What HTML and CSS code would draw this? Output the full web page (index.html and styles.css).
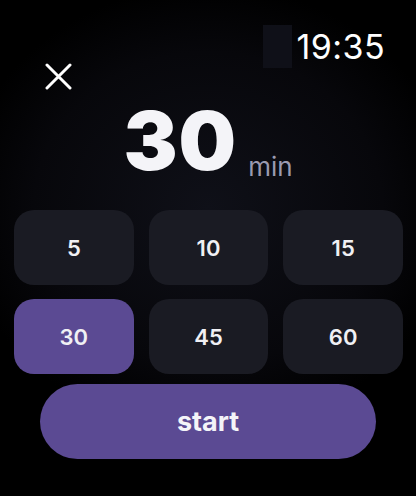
FILE: index.html
```html
<!DOCTYPE html>
<html lang="en">
<head>
    <meta charset="UTF-8">
    <meta name="viewport" content="width=device-width, initial-scale=1.0">
    <title>Timer</title>
    <link rel="stylesheet" href="styles.css">
</head>
<body>
    <div class="screen">
        <!-- top bar: close + clock -->
        <div class="top-bar">
            <button class="close" type="button" aria-label="close">
                <svg width="27" height="27" viewBox="0 0 27 27">
                    <path d="M2 2 L25 25 M25 2 L2 25" stroke="#fff" stroke-width="3" stroke-linecap="round" fill="none"/>
                </svg>
            </button>
            <div class="status">
                <div class="status-box"></div>
                <span class="clock">19:35</span>
            </div>
        </div>

        <!-- selected duration -->
        <div class="duration">
            <span class="duration-value">30</span><span class="duration-unit">min</span>
        </div>

        <!-- presets -->
        <div class="presets">
            <button class="preset" type="button">5</button>
            <button class="preset" type="button">10</button>
            <button class="preset" type="button">15</button>
            <button class="preset active" type="button">30</button>
            <button class="preset" type="button">45</button>
            <button class="preset" type="button">60</button>
        </div>

        <button class="start" type="button">start</button>
    </div>
</body>
</html>
```

FILE: styles.css
```css
body {
    margin: 0;
    padding: 0;
    background: #000;
    font-family: Inter, "Noto Sans", sans-serif;
    color: #f4f4f8;
}

.screen {
    width: 416px;
    height: 496px;
    box-sizing: border-box;
    background: radial-gradient(ellipse 60% 45% at 50% 42%, #0f1018 0%, #07070b 70%, #000 100%);
    overflow: hidden;
}

.top-bar {
    display: flex;
    justify-content: space-between;
    align-items: flex-start;
    padding: 25px 31px 0 45px;
    height: 89px;
    box-sizing: border-box;
}

.close {
    margin-top: 38px;
    padding: 0;
    border: none;
    background: none;
    width: 27px;
    height: 27px;
    display: block;
}

.close svg {
    display: block;
}

.status {
    display: flex;
    align-items: center;
    gap: 5px;
}

.status-box {
    width: 29px;
    height: 43px;
    background: #0f1018;
}

.clock {
    font-size: 34px;
    font-weight: 400;
    line-height: 43px;
    color: #fff;
    letter-spacing: 0.4px;
}

.duration {
    text-align: center;
    margin-top: 12px;
    height: 80px;
    line-height: 80px;
}

.duration-value {
    font-size: 81px;
    font-weight: 900;
    letter-spacing: 1px;
    color: #f4f4f8;
}

.duration-unit {
    font-size: 26px;
    font-weight: 400;
    color: #9a9ab0;
    margin-left: 11px;
    vertical-align: -6px;
    line-height: 1;
}

.presets {
    display: grid;
    grid-template-columns: repeat(3, 1fr);
    grid-auto-rows: 75px;
    column-gap: 15px;
    row-gap: 14px;
    padding: 0 13px 0 14px;
    margin-top: 29px;
}

.preset {
    border: none;
    border-radius: 20px;
    background: #1a1b23;
    color: #f0f0f4;
    font-family: inherit;
    font-size: 22px;
    font-weight: 600;
    padding: 0;
}

.preset.active {
    background: #5b4a93;
}

.start {
    display: block;
    width: 336px;
    height: 75px;
    margin: 10px 0 0 40px;
    border: none;
    border-radius: 38px;
    background: #5b4a93;
    color: #f4f4f8;
    font-family: inherit;
    font-size: 27px;
    font-weight: 700;
    padding: 0;
}
```
